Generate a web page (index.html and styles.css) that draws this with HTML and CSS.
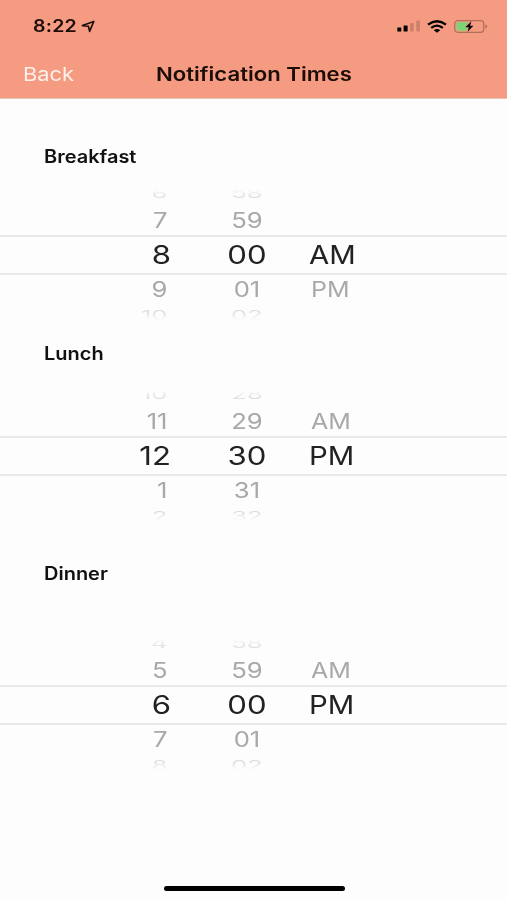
FILE: index.html
```html
<!DOCTYPE html>
<html lang="en">
<head>
    <meta charset="UTF-8">
    <title>Notification Times</title>
    <link rel="stylesheet" href="styles.css">
</head>
<body>

<header class="header">
    <div class="status">
        <span class="clock">8:22</span>
        <svg class="arrow" width="14" height="13" viewBox="0 0 14 13"><path d="M1.4 5.6 L12.8 1.4 L8.6 11.4 L7.4 6.2 Z" fill="none" stroke="#1c0d08" stroke-width="1.6" stroke-linejoin="round"/></svg>
        <svg class="signal" width="24" height="12" viewBox="0 0 24 12">
            <rect x="0.3" y="7.5" width="4" height="4" rx="0.6" fill="#000"/>
            <rect x="6.6" y="5.5" width="4" height="6" rx="0.6" fill="#000"/>
            <rect x="13" y="3" width="3.8" height="8.5" rx="1" fill="#cf806b"/>
            <rect x="19.2" y="0.5" width="3.8" height="11" rx="1" fill="#cf806b"/>
        </svg>
        <svg class="wifi" width="20" height="13" viewBox="0 0 20 13">
            <path d="M1 4.6 Q10 -2.2 19 4.6 M4.2 7.9 Q10 3.4 15.8 7.9" fill="none" stroke="#000" stroke-width="2.3"/>
            <path d="M6.8 10.2 Q10 7.8 13.2 10.2 L10 12.8 Z" fill="#000"/>
        </svg>
        <svg class="battery" width="34" height="13" viewBox="0 0 34 13">
            <rect x="0.7" y="0.7" width="29" height="11.6" rx="3" fill="none" stroke="#b06f58" stroke-width="1.2"/>
            <path d="M4.2 2.2 H14.5 L11 7 H13.5 L12.5 10.8 H4.2 Q2.7 10.8 2.7 9 V4 Q2.7 2.2 4.2 2.2" fill="#7bd574"/>
            <path d="M17.5 1.3 L11.3 7.3 H14.8 L13.6 11.7 L19.4 5.7 H16 Z" fill="#000"/>
            <path d="M31.3 4.5 Q33.2 5 33.2 6.5 Q33.2 8 31.3 8.5 Z" fill="#b06f58"/>
        </svg>
    </div>
    <div class="nav">
        <a class="back">Back</a>
        <h1 class="title">Notification Times</h1>
    </div>
</header>

<section class="meal">
    <h2 class="breakfast">Breakfast</h2>
    <div class="picker">
        <div class="row far"><span class="hour">6</span><span class="minute">58</span><span class="period"></span></div>
        <div class="row near"><span class="hour">7</span><span class="minute">59</span><span class="period"></span></div>
        <div class="row selected"><span class="hour">8</span><span class="minute">00</span><span class="period">AM</span></div>
        <div class="row near"><span class="hour">9</span><span class="minute">01</span><span class="period">PM</span></div>
        <div class="row far"><span class="hour">10</span><span class="minute">02</span><span class="period"></span></div>
    </div>
</section>

<section class="meal">
    <h2 class="lunch">Lunch</h2>
    <div class="picker">
        <div class="row far"><span class="hour">10</span><span class="minute">28</span><span class="period"></span></div>
        <div class="row near"><span class="hour">11</span><span class="minute">29</span><span class="period">AM</span></div>
        <div class="row selected"><span class="hour">12</span><span class="minute">30</span><span class="period">PM</span></div>
        <div class="row near"><span class="hour">1</span><span class="minute">31</span><span class="period"></span></div>
        <div class="row far"><span class="hour">2</span><span class="minute">32</span><span class="period"></span></div>
    </div>
</section>

<section class="meal">
    <h2 class="dinner">Dinner</h2>
    <div class="picker">
        <div class="row far"><span class="hour">4</span><span class="minute">58</span><span class="period"></span></div>
        <div class="row near"><span class="hour">5</span><span class="minute">59</span><span class="period">AM</span></div>
        <div class="row selected"><span class="hour">6</span><span class="minute">00</span><span class="period">PM</span></div>
        <div class="row near"><span class="hour">7</span><span class="minute">01</span><span class="period"></span></div>
        <div class="row far"><span class="hour">8</span><span class="minute">02</span><span class="period"></span></div>
    </div>
</section>

<div class="home-bar"></div>

</body>
</html>
```
FILE: styles.css
```css
body {
    margin: 0; height: 900px; overflow: hidden; background-color: #fdfdfd; font-family: Inter, "Liberation Sans", sans-serif; color: #222;
}

.header { height: 99px; background-color: #f49b82; border-bottom: 1px solid #e6c4ba; box-sizing: border-box;
}

.status { display: flex; align-items: center; height: 26px; padding: 13px 19px 0 33px;
}

.clock { width: 49px; font-size: 17px; font-weight: 600; color: #1c0d08; transform: scaleX(1.15); transform-origin: left; letter-spacing: 0.2px; }
.arrow { margin-right: 302px; }
.signal { margin-right: 6px; }
.wifi { margin-right: 7px; }
.signal, .wifi, .battery, .arrow { flex-shrink: 0; }

.nav { display: flex; align-items: center; height: 30px; margin-top: 20px; padding-left: 23px;
}

.back { width: 133px; font-size: 19px; color: #fff0ea; transform: scaleX(1.15); transform-origin: left; }

.title { margin: 0; font-size: 18.5px; font-weight: 600; color: #1c0d08; white-space: nowrap; transform: scaleX(1.195); transform-origin: left;
}

.meal h2 { width: fit-content; margin: 0 0 0 44px; height: 24px; line-height: 24px; font-size: 18px; font-weight: 600; color: #111; transform-origin: left; transform: scaleX(1.11);
}

.meal .breakfast { margin-top: 46px; margin-bottom: 13px; }
.meal .lunch { margin-top: 15px; margin-bottom: 17px; }
.meal .dinner { margin-top: 34px; margin-bottom: 46px; }

/* wheel: outer rows are squashed and fade out */
.picker { height: 145px;
    -webkit-mask-image: linear-gradient(transparent 7px, #000 28px, #000 117px, transparent 138px);
    mask-image: linear-gradient(transparent 7px, #000 28px, #000 117px, transparent 138px);
}

.row { display: flex; align-items: center; box-sizing: border-box; height: 30px; color: #a9a9a9; font-size: 21px; }
.row.far { height: 23px; color: #b5b5b5; }
.row.selected { height: 40px; margin-bottom: -1px; padding-bottom: 2px; font-size: 25.5px; color: #222; border-top: 2px solid #e9e9e9; border-bottom: 2px solid #e9e9e9; }

.hour { width: 171px; text-align: right; transform-origin: right; transform: scaleX(1.22); }
.minute { width: 80px; margin-left: 36px; text-align: center; transform: scaleX(1.22); }
.period { width: 60px; margin-left: 22px; transform-origin: left; transform: scaleX(1.15); }

.near .hour, .far .hour { width: 167.5px; }
.near .minute, .far .minute { margin-left: 39.5px; }
.near .period { margin-left: 24px; transform: scaleX(1.19); }
.far .hour, .far .minute { transform: scale(1.22, 0.6); }

.home-bar { width: 181px; height: 5px; margin: 109px auto 0 164px; border-radius: 3px; background-color: #000;
}
```
